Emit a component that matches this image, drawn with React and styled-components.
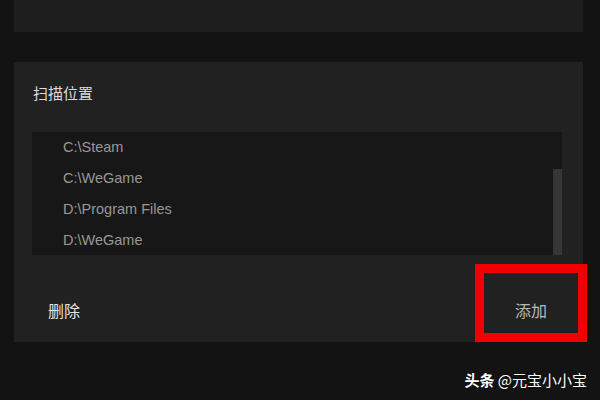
import React from 'react';
import styled, { createGlobalStyle } from 'styled-components';

const GlobalStyle = createGlobalStyle`
    html, body {
        margin: 0;
        padding: 0;
        background: #131313;
        font-family: "Liberation Sans", "Noto Sans CJK SC", sans-serif;
    }
`;

const Page = styled.div`
    width: 600px;
    height: 400px;
    box-sizing: border-box;
    padding: 0 17px 0 14px;
    overflow: hidden;
    background: #131313;
`;

const TopCard = styled.div`
    height: 32px;
    background: #1e1e1e;
`;

const Card = styled.div`
    margin-top: 30px;
    height: 280px;
    box-sizing: border-box;
    padding: 0 21px 0 18px;
    background: #212121;
    display: flex;
    flex-direction: column;
`;

const Title = styled.div`
    padding: 20px 0 0 1px;
    height: 22px;
    line-height: 22px;
    font-size: 15px;
    color: #dcdcdc;
    font-family: "Noto Sans CJK SC", sans-serif;
    margin-bottom: 28px;
`;

const ListBox = styled.div`
    height: 123px;
    background: #171717;
    display: flex;
`;

const Items = styled.ul`
    flex: 1;
    list-style: none;
    margin: 0;
    padding: 0 0 0 31px;
`;

const Item = styled.li`
    height: 31px;
    line-height: 31px;
    font-size: 14.5px;
    color: #989898;
`;

const ScrollTrack = styled.div`
    width: 9px;
    display: flex;
    flex-direction: column;
    padding-top: 37px;
`;

const ScrollThumb = styled.div`
    flex: 1;
    background: #363636;
`;

const Footer = styled.div`
    flex: 1;
    display: flex;
    justify-content: space-between;
    align-items: flex-end;
    margin-right: -25px;
`;

const DeleteButton = styled.div`
    margin: 0 0 22px 16px;
    line-height: 20px;
    font-size: 16px;
    color: #e4e4e4;
    font-family: "Noto Sans CJK SC", sans-serif;
`;

const AddButton = styled.div`
    width: 112px;
    height: 78px;
    box-sizing: border-box;
    border: 9px solid #f20000;
    display: flex;
    justify-content: center;
    align-items: flex-end;
    padding-bottom: 13px;
    font-size: 16px;
    line-height: 20px;
    color: #b8b8b8;
    font-family: "Noto Sans CJK SC", sans-serif;
`;

const Watermark = styled.div`
    margin: 28px -4px 0 0;
    text-align: right;
    line-height: 20px;
    font-size: 15px;
    color: #ffffff;
    font-family: "Noto Sans CJK SC", sans-serif;
    text-shadow: 0 0 2px rgba(0, 0, 0, 0.6);

    b {
        font-weight: 700;
    }
`;

const paths = ['C:\\Steam', 'C:\\WeGame', 'D:\\Program Files', 'D:\\WeGame'];

function App() {
    return (
        <>
            <GlobalStyle />
            <Page>
                <TopCard />
                <Card>
                    <Title>扫描位置</Title>
                    <ListBox>
                        <Items>
                            {paths.map((p) => (
                                <Item key={p}>{p}</Item>
                            ))}
                        </Items>
                        <ScrollTrack>
                            <ScrollThumb />
                        </ScrollTrack>
                    </ListBox>
                    <Footer>
                        <DeleteButton>删除</DeleteButton>
                        <AddButton>添加</AddButton>
                    </Footer>
                </Card>
                <Watermark>
                    <b>头条</b> @元宝小小宝
                </Watermark>
            </Page>
        </>
    );
}

export default App;
